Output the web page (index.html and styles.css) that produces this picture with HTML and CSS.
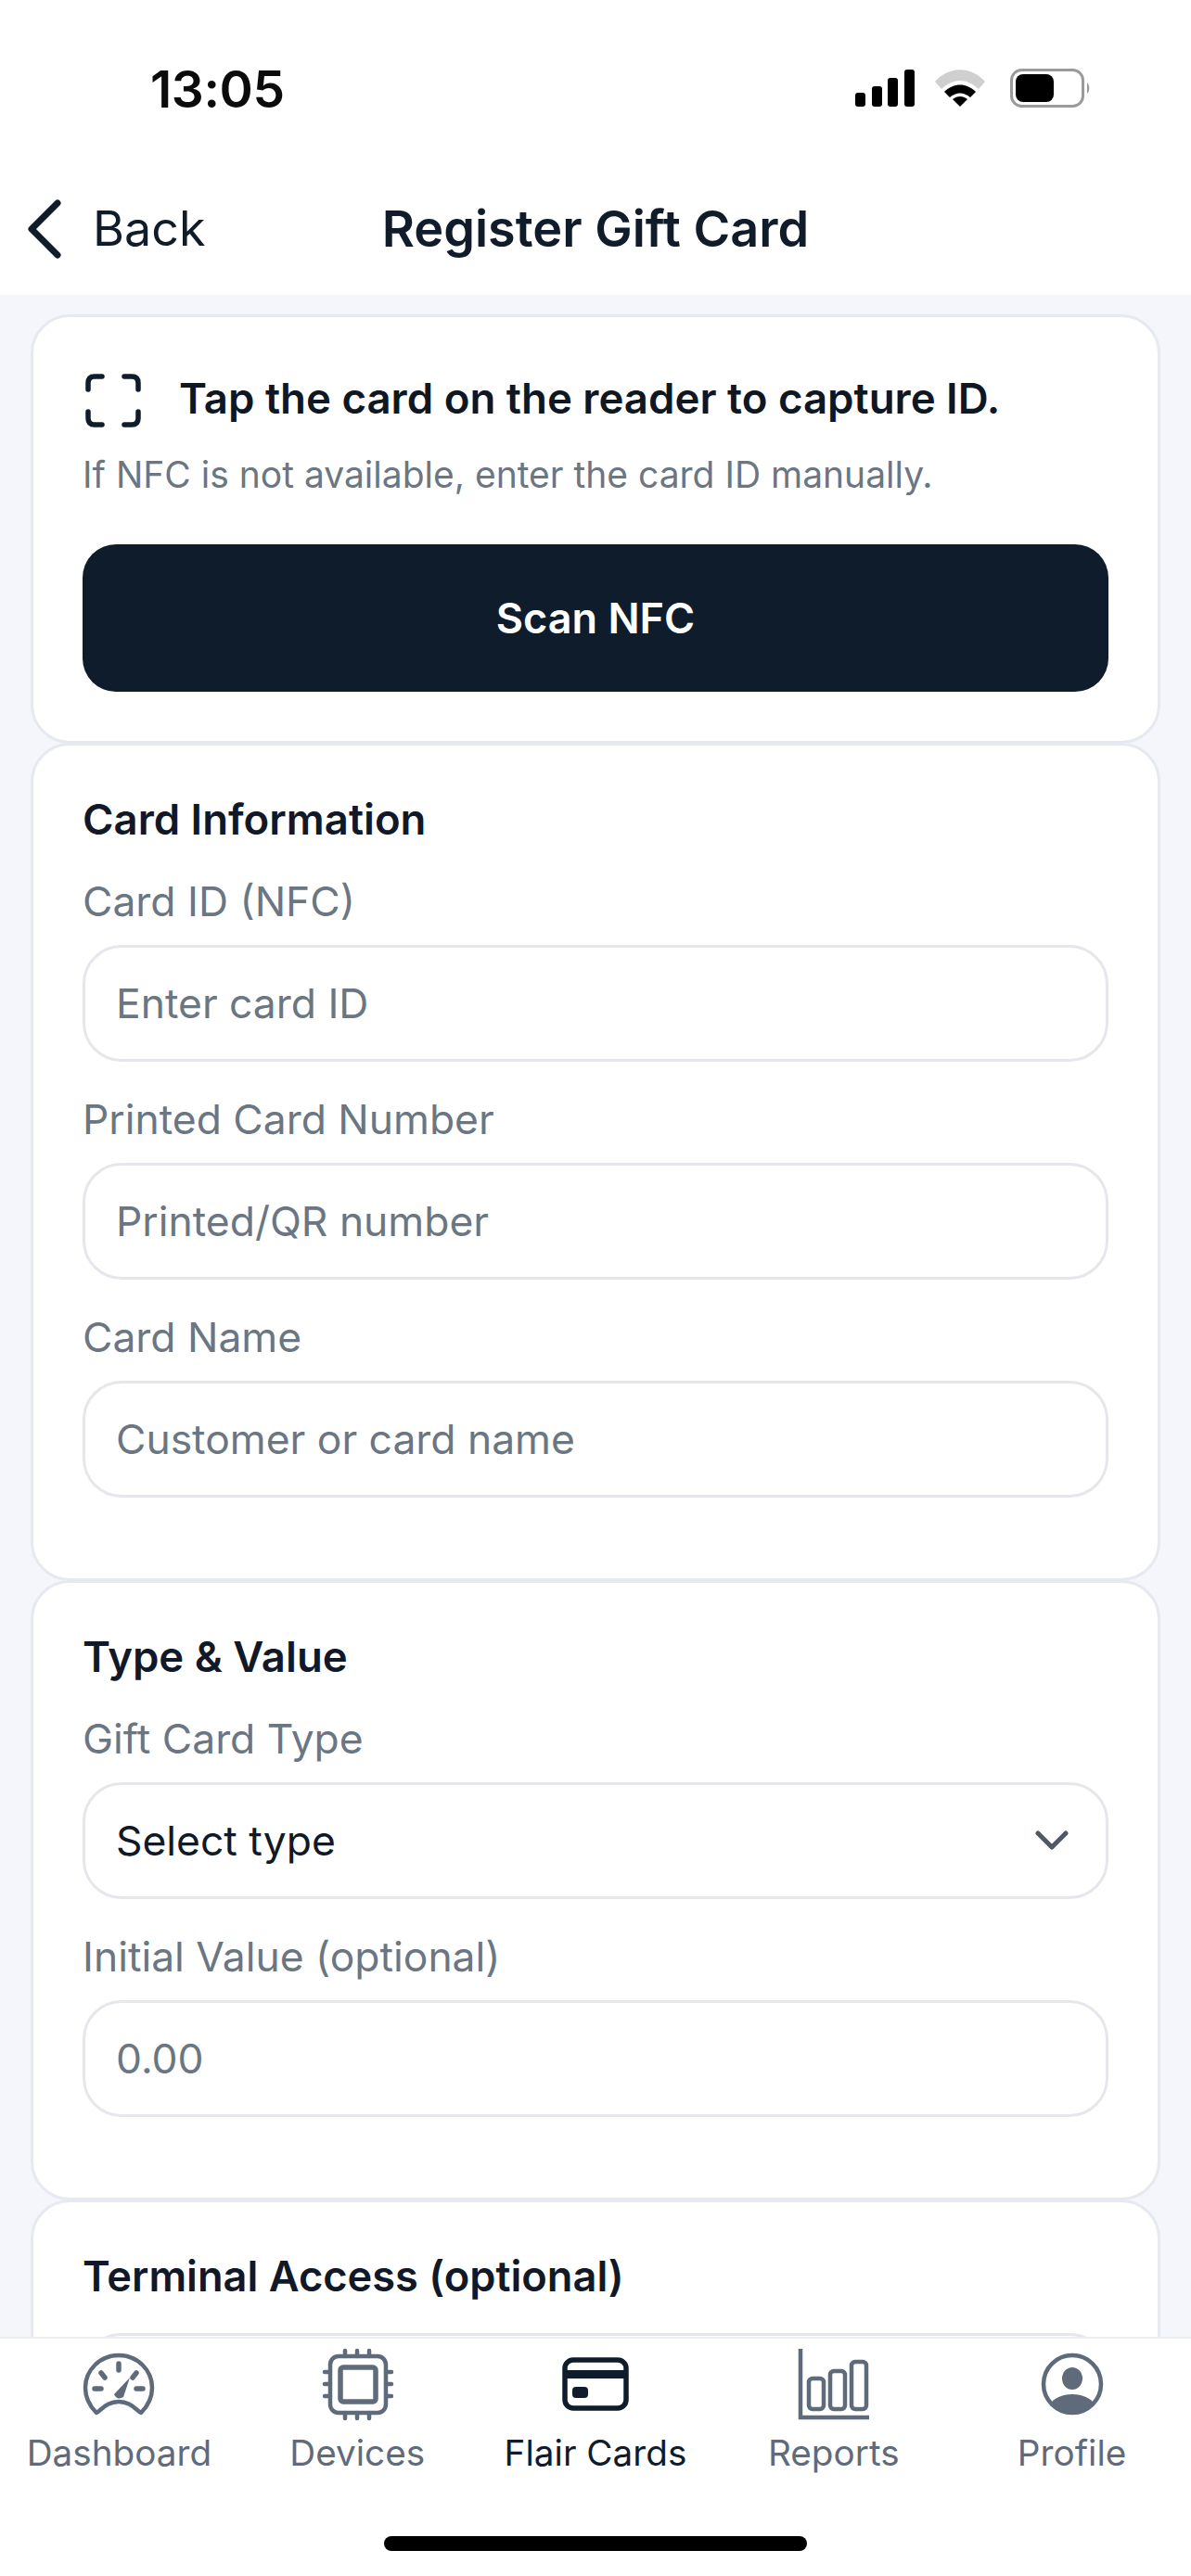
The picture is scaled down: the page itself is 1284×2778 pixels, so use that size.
FILE: index.html
```html
<!DOCTYPE html>
<html lang="en">
<head>
<meta charset="utf-8">
<title>Register Gift Card</title>
<link rel="stylesheet" href="styles.css">
</head>
<body>
<div class="app">
  <div class="status">
    <span class="time">13:05</span>
    <div class="status-icons">
      <svg class="ic-signal" viewBox="0 0 64 40"><rect x="0" y="25" width="11" height="15" rx="3"/><rect x="18" y="18" width="11" height="22" rx="3"/><rect x="35" y="9" width="11" height="31" rx="3"/><rect x="53" y="0" width="11" height="40" rx="3"/></svg>
      <svg class="ic-wifi" viewBox="0 0 54 40"><path class="wifi-off" d="M0 13 C15 -4 39 -4 54 13 L47 21 C34 9 20 9 7 21 Z"/><path d="M10 24 C20 14 34 14 44 24 L38 30 C31 24 23 24 16 30 Z"/><path d="M19 32 C24 28 30 28 35 32 L27 40 Z"/></svg>
      <svg class="ic-batt" viewBox="0 0 88 42"><rect class="batt-shell" x="1.5" y="1.5" width="77" height="39" rx="11"/><rect x="6" y="6" width="41" height="30" rx="8"/><path class="batt-nub" d="M83 15 C86 17 86 25 83 27 Z"/></svg>
    </div>
  </div>

  <header class="nav">
    <div class="back">
      <svg class="ic-back" viewBox="0 0 40 64"><path d="M34 4 L6 32 L34 60"/></svg>
      <span>Back</span>
    </div>
    <h1 class="title">Register Gift Card</h1>
  </header>

  <main class="content">
    <section class="card card-scan">
      <div class="scan-row">
        <svg class="ic-scan" viewBox="0 0 60 58"><path d="M3 17 V10 Q3 3 10 3 H18 M42 3 H50 Q57 3 57 10 V17 M3 41 V48 Q3 55 10 55 H18 M42 55 H50 Q57 55 57 48 V41"/></svg>
        <p class="scan-title">Tap the card on the reader to capture ID.</p>
      </div>
      <p class="scan-sub">If NFC is not available, enter the card ID manually.</p>
      <button class="btn" type="button">Scan NFC</button>
    </section>

    <section class="card">
      <h2 class="card-h">Card Information</h2>
      <div class="field"><label class="lbl">Card ID (NFC)</label><input class="inp" placeholder="Enter card ID"></div>
      <div class="field"><label class="lbl">Printed Card Number</label><input class="inp" placeholder="Printed/QR number"></div>
      <div class="field"><label class="lbl">Card Name</label><input class="inp" placeholder="Customer or card name"></div>
    </section>

    <section class="card">
      <h2 class="card-h">Type &amp; Value</h2>
      <div class="field"><label class="lbl">Gift Card Type</label>
        <div class="inp select"><span>Select type</span><svg class="ic-chev" viewBox="0 0 36 22"><path d="M3 3 L18 18 L33 3"/></svg></div>
      </div>
      <div class="field"><label class="lbl">Initial Value (optional)</label><input class="inp" placeholder="0.00"></div>
    </section>

    <section class="card">
      <h2 class="card-h terminal">Terminal Access (optional)</h2>
      <div class="inp"></div>
    </section>
  </main>

  <nav class="tabbar">
    <div class="tabs">
      <div class="tab">
        <svg class="tab-ic" viewBox="0 0 84 80"><path class="st" d="M18 69 C9 60 6 50 6 42 A36 35 0 0 1 78 42 C78 50 75 60 66 69 C60 65 54 57 42 57 C30 57 24 65 18 69 Z"/><path class="st th" d="M42 16 V23 M23 26 L27 31 M61 26 L57 31 M16 43 H23 M61 43 H68"/><path class="fl" d="M37 49 L54 31 L47 52 Q40 56 37 49 Z"/></svg>
        <span class="tab-l">Dashboard</span>
      </div>
      <div class="tab">
        <svg class="tab-ic" viewBox="0 0 84 80"><rect class="st" x="13" y="8" width="60" height="61" rx="9"/><rect class="st th" x="24" y="20" width="38" height="37" rx="3"/><path class="st" d="M29 2 V8 M42 2 V8 M55 2 V8 M29 69 V75 M42 69 V75 M55 69 V75 M7 25 H13 M7 38 H13 M7 51 H13 M73 25 H79 M73 38 H79 M73 51 H79"/></svg>
        <span class="tab-l">Devices</span>
      </div>
      <div class="tab is-active">
        <svg class="tab-ic" viewBox="0 0 84 80"><rect class="st th" x="9" y="12" width="66" height="52" rx="9"/><rect class="fl" x="9" y="23" width="66" height="9"/><rect class="fl" x="17" y="41" width="17" height="12" rx="4"/></svg>
        <span class="tab-l">Flair Cards</span>
      </div>
      <div class="tab">
        <svg class="tab-ic" viewBox="0 0 84 80"><path class="st sq" d="M6 0 V74 H80"/><rect class="st" x="15" y="32" width="16" height="33" rx="4"/><rect class="st" x="38" y="24" width="16" height="41" rx="4"/><rect class="st" x="61" y="14" width="16" height="51" rx="4"/></svg>
        <span class="tab-l">Reports</span>
      </div>
      <div class="tab">
        <svg class="tab-ic" viewBox="0 0 84 80"><circle class="st" cx="42" cy="38" r="31"/><ellipse class="fl" cx="42" cy="32" rx="11" ry="12"/><path class="fl" d="M18 60 C22 53 31 49 42 49 C53 49 62 53 66 60 C60 66 51 69 42 69 C33 69 24 66 18 60 Z"/></svg>
        <span class="tab-l">Profile</span>
      </div>
    </div>
    <div class="home"></div>
  </nav>
</div>
</body>
</html>
```

FILE: styles.css
```css
* { box-sizing: border-box; }
html, body { margin: 0; padding: 0; }
body { font-family: Inter, "Liberation Sans", sans-serif; background: #fff; color: #111827; }
.app { width: 1284px; height: 2778px; display: flex; flex-direction: column; overflow: hidden; background: #f5f6fb; }

.status { height: 176px; flex: none; background: #fff; display: flex; justify-content: space-between; padding: 74px 106px 0 162px; }
.time { font-size: 55px; line-height: 44px; font-weight: 600; color: #0b0b0b; letter-spacing: -0.4px; }
.status-icons { display: flex; align-items: flex-start; }
.ic-signal { width: 64px; height: 40px; margin-top: 1px; fill: #000; }
.ic-wifi { width: 54px; height: 40px; margin: 1px 26px 0 22px; fill: #000; }
.wifi-off { fill: #cfcfcf; }
.ic-batt { width: 90px; height: 42px; fill: #000; }
.batt-shell { fill: #fff; stroke: #9a9a9a; stroke-width: 3; }
.batt-nub { fill: #9a9a9a; }

.nav { height: 142px; flex: none; background: #fff; display: flex; align-items: center; position: relative; }
.back { display: flex; align-items: center; padding-left: 28px; font-size: 52px; color: #111c2b; line-height: 64px; }
.ic-back { width: 40px; height: 64px; margin-right: 32px; fill: none; stroke: #111c2b; stroke-width: 7; stroke-linecap: round; stroke-linejoin: round; }
.title { position: absolute; left: 0; right: 0; margin: 0; text-align: center; font-size: 54px; line-height: 64px; font-weight: 600; color: #111c2b; }

.content { flex: 1; min-height: 0; overflow: hidden; padding: 21px 33px 0; display: flex; flex-direction: column; }
.card { flex: none; background: #fff; border: 3px solid #e7e9f0; border-radius: 42px; padding: 50px 53px 87px; margin-bottom: -1px; }
.card-scan { padding: 60px 53px 52px; height: 463px; }

.scan-row { display: flex; align-items: center; gap: 41px; padding-left: 3px; height: 60px; }
.ic-scan { width: 60px; height: 58px; fill: none; stroke: #111c2b; stroke-width: 5.5; stroke-linecap: round; flex: none; }
.scan-title { margin: 0 0 4px; font-size: 45.6px; line-height: 56px; font-weight: 600; color: #0f1723; white-space: nowrap; }
.scan-sub { margin: 22px 0 0; font-size: 39px; line-height: 56px; color: #6b7683; white-space: nowrap; }
.btn { display: block; width: 100%; height: 159px; margin-top: 47px; border: 0; border-radius: 36px; background: #0f1c2c; color: #fff; font: 600 45px/60px Inter, "Liberation Sans", sans-serif; }

.card-h { margin: 0 0 -4px; font-size: 45.5px; line-height: 60px; font-weight: 600; color: #111827; }
.lbl { display: block; font-size: 44.4px; line-height: 60px; color: #6b7683; padding-top: 32px; height: 109px; }
.inp { display: block; width: 100%; height: 126px; border: 3px solid #e5e7ec; border-radius: 42px; background: #fff; padding: 0 33px; font: 400 44.4px/60px Inter, "Liberation Sans", sans-serif; color: #111827; outline: 0; }
.inp::placeholder { color: #6b7683; opacity: 1; }
.select { display: flex; align-items: center; justify-content: space-between; padding-right: 40px; }
.ic-chev { width: 36px; height: 22px; fill: none; stroke: #4f5966; stroke-width: 5; stroke-linecap: round; stroke-linejoin: round; }
.card-h.terminal { margin-bottom: 31px; font-size: 45.2px; }

.tabbar { flex: none; height: 258px; background: #fff; border-top: 2px solid #eceef2; padding-top: 11px; display: flex; flex-direction: column; }
.tabs { display: grid; grid-template-columns: repeat(5, 1fr); }
.tab { display: flex; flex-direction: column; align-items: center; color: #5f6b7a; }
.tab-ic { width: 84px; height: 80px; overflow: visible; display: block; }
.tab-l { font-size: 38.7px; line-height: 50px; margin-top: 7px; white-space: nowrap; }
.is-active { color: #0f1c2c; }
.st { fill: none; stroke: currentColor; stroke-width: 4.5; stroke-linecap: round; stroke-linejoin: round; }
.th { stroke-width: 5.5; }
.sq { stroke-linecap: butt; stroke-linejoin: miter; }
.fl { fill: currentColor; }
.home { width: 456px; height: 16px; border-radius: 8px; background: #000; margin: 65px auto 0; }
```
